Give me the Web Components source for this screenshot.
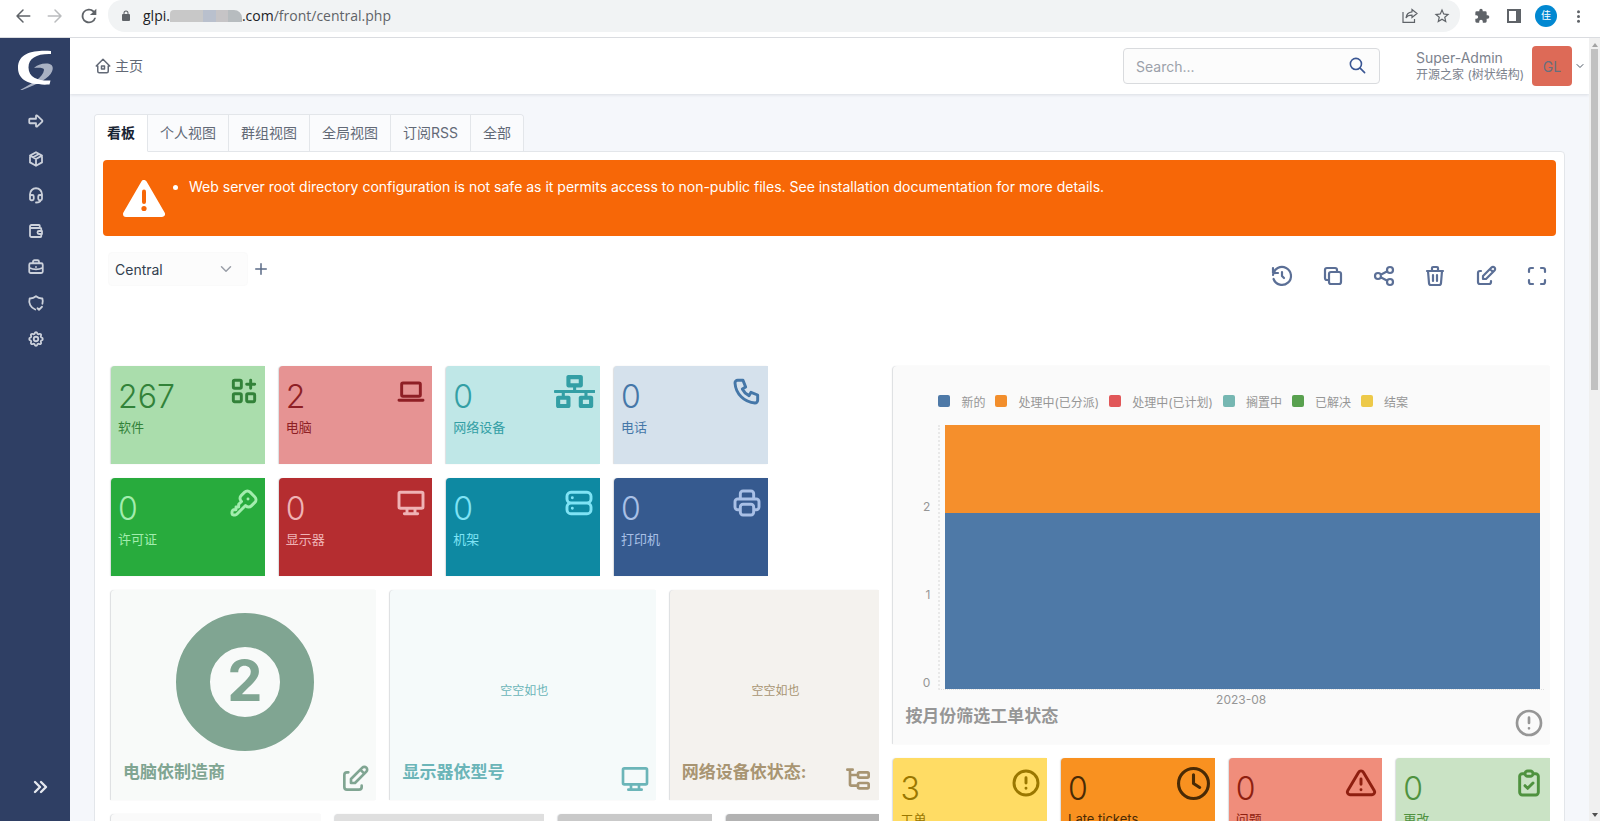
<!DOCTYPE html>
<html lang="zh-CN">
<head>
<meta charset="utf-8">
<title>主页 - GLPI</title>
<style>
html,body{margin:0;height:100%}
body{font-family:Inter,"Noto Sans CJK SC",sans-serif;font-size:14px;color:#626976;background:#f5f7fb;overflow:hidden}
</style>
</head>
<body>
<glpi-app></glpi-app>
<script>
const line = d => ({box:'0 0 24 24', body:`<path d="${d}" fill="none" stroke="currentColor" stroke-width="var(--stroke,2)" style="stroke-width:var(--stroke,2)" stroke-linecap="round" stroke-linejoin="round"/>`});
const ICONS = {
  'arrow-big': line('M4 9h8v-3.586a1 1 0 0 1 1.707-.707l6.586 6.586a1 1 0 0 1 0 1.414l-6.586 6.586a1 1 0 0 1-1.707-.707v-3.586h-8a1 1 0 0 1-1-1v-4a1 1 0 0 1 1-1z'),
  package: line('M12 3l8 4.5v9l-8 4.5l-8-4.5v-9z M12 12l8-4.5 M12 12v9 M12 12l-8-4.5 M16 5.25l-8 4.5'),
  headset: line('M4 15v-4a8 8 0 0 1 16 0v4 M18 19c0 1.657-2.686 3-6 3 M4 14a2 2 0 0 1 2-2h1a2 2 0 0 1 2 2v3a2 2 0 0 1-2 2h-1a2 2 0 0 1-2-2z M15 14a2 2 0 0 1 2-2h1a2 2 0 0 1 2 2v3a2 2 0 0 1-2 2h-1a2 2 0 0 1-2-2z'),
  wallet: line('M17 8v-3a1 1 0 0 0-1-1h-10a2 2 0 0 0 0 4h12a1 1 0 0 1 1 1v3m0 4v3a1 1 0 0 1-1 1h-12a2 2 0 0 1-2-2v-12 M20 12v4h-4a2 2 0 0 1 0-4h4'),
  briefcase: line('M5 7h14a2 2 0 0 1 2 2v9a2 2 0 0 1-2 2h-14a2 2 0 0 1-2-2v-9a2 2 0 0 1 2-2z M8 7v-2a2 2 0 0 1 2-2h4a2 2 0 0 1 2 2v2 M12 12v.01 M3 13a20 20 0 0 0 18 0'),
  shield: line('M11 20.7a12 12 0 0 1-7.5-14.7a12 12 0 0 0 8.500-3a12 12 0 0 0 8.500 3a12 12 0 0 1 0 7 M14 19l2 2l4-4'),
  settings: line('M10.325 4.317c.426-1.756 2.924-1.756 3.350 0a1.724 1.724 0 0 0 2.573 1.066c1.543-.94 3.310.826 2.370 2.370a1.724 1.724 0 0 0 1.065 2.572c1.756.426 1.756 2.924 0 3.350a1.724 1.724 0 0 0-1.066 2.573c.94 1.543-.826 3.310-2.370 2.370a1.724 1.724 0 0 0-2.572 1.065c-.426 1.756-2.924 1.756-3.350 0a1.724 1.724 0 0 0-2.573-1.066c-1.543.94-3.310-.826-2.370-2.370a1.724 1.724 0 0 0-1.065-2.572c-1.756-.426-1.756-2.924 0-3.350a1.724 1.724 0 0 0 1.066-2.573c-.94-1.543.826-3.310 2.370-2.370c1 .608 2.296.07 2.572-1.065z M9 12a3 3 0 1 0 6 0a3 3 0 1 0-6 0'),
  chevrons: line('M7 7l5 5l-5 5 M13 7l5 5l-5 5'),
  home: line('M5 12h-2l9-9l9 9h-2 M5 12v7a2 2 0 0 0 2 2h10a2 2 0 0 0 2-2v-7 M10 12h4v4h-4z'),
  search: line('M3 10a7 7 0 1 0 14 0a7 7 0 1 0-14 0 M21 21l-6-6'),
  down: line('M6 9l6 6l6-6'),
  plus: line('M12 5v14 M5 12h14'),
  history: line('M12 8v4l2 2 M3.050 11a9 9 0 1 1 .5 4 M3 4v5h5 M3 6.500l2.500 2.500'),
  copy: line('M10 8h8a2 2 0 0 1 2 2v8a2 2 0 0 1-2 2h-8a2 2 0 0 1-2-2v-8a2 2 0 0 1 2-2z M16 8v-2a2 2 0 0 0-2-2h-8a2 2 0 0 0-2 2v8a2 2 0 0 0 2 2h2'),
  share: line('M3 12a3 3 0 1 0 6 0a3 3 0 1 0-6 0 M15 6a3 3 0 1 0 6 0a3 3 0 1 0-6 0 M15 18a3 3 0 1 0 6 0a3 3 0 1 0-6 0 M8.700 10.700l6.600-3.400 M8.700 13.300l6.600 3.400'),
  trash: line('M4 7h16 M10 11v6 M14 11v6 M5 7l1 12a2 2 0 0 0 2 2h8a2 2 0 0 0 2-2l1-12 M9 7v-3a1 1 0 0 1 1-1h4a1 1 0 0 1 1 1v3'),
  edit: line('M7 7h-1a2 2 0 0 0-2 2v9a2 2 0 0 0 2 2h9a2 2 0 0 0 2-2v-1 M9 15v-3l8.500-8.500a2.120 2.120 0 0 1 3 3l-8.500 8.500z M16 5l3 3'),
  maximize: line('M4 8v-2a2 2 0 0 1 2-2h2 M4 16v2a2 2 0 0 0 2 2h2 M16 4h2a2 2 0 0 1 2 2v2 M16 20h2a2 2 0 0 0 2-2v-2'),
  apps: line('M5 4h4a1 1 0 0 1 1 1v4a1 1 0 0 1-1 1h-4a1 1 0 0 1-1-1v-4a1 1 0 0 1 1-1z M5 14h4a1 1 0 0 1 1 1v4a1 1 0 0 1-1 1h-4a1 1 0 0 1-1-1v-4a1 1 0 0 1 1-1z M15 14h4a1 1 0 0 1 1 1v4a1 1 0 0 1-1 1h-4a1 1 0 0 1-1-1v-4a1 1 0 0 1 1-1z M14 7h6 M17 4v6'),
  laptop: line('M3 19h18 M6 6h12a1 1 0 0 1 1 1v8a1 1 0 0 1-1 1h-12a1 1 0 0 1-1-1v-8a1 1 0 0 1 1-1z'),
  phone: line('M5 4h4l2 5l-2.500 1.500a11 11 0 0 0 5 5l1.500-2.500l5 2v4a2 2 0 0 1-2 2a16 16 0 0 1-15-15a2 2 0 0 1 2-2'),
  key: line('M16.555 3.843l3.602 3.602a2.877 2.877 0 0 1 0 4.069l-2.643 2.643a2.877 2.877 0 0 1-4.069 0l-.301-.301l-6.558 6.558a2 2 0 0 1-1.239.578l-.175.008h-1.172a1 1 0 0 1-.993-.883l-.007-.117v-1.172a2 2 0 0 1 .467-1.284l.119-.13l.414-.414h2v-2h2v-2l2.144-2.144l-.301-.301a2.877 2.877 0 0 1 0-4.069l2.643-2.643a2.877 2.877 0 0 1 4.069 0z M15 9h.01'),
  desktop: line('M4 4h16a1 1 0 0 1 1 1v10a1 1 0 0 1-1 1h-16a1 1 0 0 1-1-1v-10a1 1 0 0 1 1-1z M7 20h10 M9 16v4 M15 16v4'),
  server: line('M6 4h12a3 3 0 0 1 3 3v2a3 3 0 0 1-3 3h-12a3 3 0 0 1-3-3v-2a3 3 0 0 1 3-3z M6 12h12a3 3 0 0 1 3 3v2a3 3 0 0 1-3 3h-12a3 3 0 0 1-3-3v-2a3 3 0 0 1 3-3z M7 8v.01 M7 16v.01'),
  printer: line('M17 17h2a2 2 0 0 0 2-2v-4a2 2 0 0 0-2-2h-14a2 2 0 0 0-2 2v4a2 2 0 0 0 2 2h2 M17 9v-4a2 2 0 0 0-2-2h-6a2 2 0 0 0-2 2v4 M9 13h6a2 2 0 0 1 2 2v4a2 2 0 0 1-2 2h-6a2 2 0 0 1-2-2v-4a2 2 0 0 1 2-2z'),
  alert: line('M3 12a9 9 0 1 0 18 0a9 9 0 1 0-18 0 M12 8v4 M12 16v.01'),
  triangle: line('M12 9v4 M12 17v.01 M10.240 3.957l-8.240 13.800a2 2 0 0 0 1.700 3h16.600a2 2 0 0 0 1.700-3l-8.240-13.800a2 2 0 0 0-3.520 0z'),
  clipboard: line('M9 5h-2a2 2 0 0 0-2 2v12a2 2 0 0 0 2 2h10a2 2 0 0 0 2-2v-12a2 2 0 0 0-2-2h-2 M11 3h2a2 2 0 0 1 0 4h-2a2 2 0 0 1 0-4z M9 14l2 2l4-4'),
  subtask: line('M6 9h6 M4 5h4 M6 5v11a1 1 0 0 0 1 1h5 M13 7h6a1 1 0 0 1 1 1v2a1 1 0 0 1-1 1h-6a1 1 0 0 1-1-1v-2a1 1 0 0 1 1-1z M13 15h6a1 1 0 0 1 1 1v2a1 1 0 0 1-1 1h-6a1 1 0 0 1-1-1v-2a1 1 0 0 1 1-1z'),
  clock: {box:'0 0 512 512', body:'<circle cx="256" cy="256" r="232" fill="none" stroke="currentColor" stroke-width="48"/><path d="M256 120v136l96 62" fill="none" stroke="currentColor" stroke-width="48" stroke-linecap="round" stroke-linejoin="round"/>'},
  network: {box:'0 0 640 512', body:'<path fill="currentColor" d="M640 264v-16c0-8.840-7.160-16-16-16H344v-40h72c17.670 0 32-14.330 32-32V32c0-17.670-14.330-32-32-32H224c-17.670 0-32 14.330-32 32v128c0 17.670 14.330 32 32 32h72v40H16c-8.840 0-16 7.160-16 16v16c0 8.840 7.160 16 16 16h104v40H64c-17.670 0-32 14.330-32 32v128c0 17.670 14.330 32 32 32h160c17.670 0 32-14.330 32-32V352c0-17.670-14.330-32-32-32h-56v-40h304v40h-56c-17.670 0-32 14.330-32 32v128c0 17.670 14.330 32 32 32h160c17.670 0 32-14.330 32-32V352c0-17.670-14.330-32-32-32h-56v-40h104c8.840 0 16-7.160 16-16zM256 128V64h128v64H256zm-64 320H96v-64h96v64zm352 0h-96v-64h96v64z"/>'},
  warning: {box:'0 0 42 37', body:'<path d="M21 3L39 34H3z" fill="currentColor" stroke="currentColor" stroke-width="6" stroke-linejoin="round"/><path d="M21 11.500v10.500" stroke="#f76707" stroke-width="4" stroke-linecap="round"/><circle cx="21" cy="28.500" r="2.600" fill="#f76707"/>'},
  back: line('M21 12H4 M12 4l-8 8l8 8'),
  forward: line('M3 12h17 M12 4l8 8l-8 8'),
  reload: {box:'0 0 24 24', body:'<path fill="currentColor" d="M17.650 6.350A8 8 0 1 0 19.730 14h-2.080A6 6 0 1 1 12 6c1.660 0 3.140.69 4.220 1.780L13 11h7V4z"/>'},
  lock: {box:'0 0 24 24', body:'<path fill="currentColor" d="M18 8h-1V6A5 5 0 0 0 7 6v2H6a2 2 0 0 0-2 2v10a2 2 0 0 0 2 2h12a2 2 0 0 0 2-2V10a2 2 0 0 0-2-2zM9 8V6a3 3 0 0 1 6 0v2z"/>'},
  send: {box:'0 0 16 16', body:'<path fill="none" stroke="currentColor" stroke-width="1.200" d="M1 4v10.400h11.500V11 M10 1.500l5 4l-5 4v-2.300c-3 0-5 1-6 2.800c.3-3.600 2.600-5.800 6-6.200z"/>'},
  star: {box:'0 0 24 24', body:'<path fill="currentColor" d="M22 9.240l-7.190-.62L12 2 9.190 8.630 2 9.240l5.460 4.730L5.820 21 12 17.270 18.180 21l-1.630-7.030zM12 15.400l-3.760 2.270 1-4.280-3.320-2.880 4.380-.38L12 6.100l1.710 4.040 4.380.38-3.320 2.880 1 4.280z"/>'},
  puzzle: {box:'0 0 24 24', body:'<path fill="currentColor" d="M20.500 11H19V7a2 2 0 0 0-2-2h-4V3.500a2.500 2.500 0 0 0-5 0V5H4a2 2 0 0 0-2 2v3.800h1.500a2.700 2.700 0 0 1 0 5.400H2V20a2 2 0 0 0 2 2h3.800v-1.500a2.700 2.700 0 0 1 5.400 0V22H17a2 2 0 0 0 2-2v-4h1.500a2.500 2.500 0 0 0 0-5z"/>'},
  panel: {box:'0 0 14 14', body:'<path fill="currentColor" fill-rule="evenodd" d="M0 0h14v14H0z M2 2v10h7V2z"/>'},
  dots: {box:'0 0 16 16', body:'<g fill="currentColor"><circle cx="8" cy="3" r="1.600"/><circle cx="8" cy="8" r="1.600"/><circle cx="8" cy="13" r="1.600"/></g>'},
  logo: {box:'0 0 36 40', body:'<path fill="#a9b1c3" d="M17 18c3-3 7-4.500 12-4.500c6 0 8 3 6 8c-3 7-13 12-31 19l-.5-.8C16 33 26 27.500 27 20c.3-2-4-2.500-10-2z"/><path fill="#fff" d="M34 1C18 0 1 2 1 18c0 13 13 17.500 31.500 16.500l1-4C22 31 11.500 28 11.500 17.500C11.500 8 20 3.500 34 4z"/>'}
};

class Base extends HTMLElement {
  constructor(){ super(); this.attachShadow({mode:'open'}); }
  connectedCallback(){ this.shadowRoot.innerHTML = `<style>*{box-sizing:border-box}${this.css()}</style>${this.html()}`; }
  a(n){ return this.getAttribute(n) || ''; }
}

customElements.define('ui-icon', class extends Base {
  css(){ return `:host{display:block;flex:none;height:${this.a('size')||24}px}svg{display:block;height:100%;width:auto}`; }
  html(){ const i = ICONS[this.a('name')]; return `<svg viewBox="${i.box}" aria-hidden="true">${i.body}</svg>`; }
});

customElements.define('browser-bar', class extends Base {
  css(){ return `
    :host{display:flex;align-items:flex-start;height:38px;border-bottom:1px solid #dadce0;background:#fff;color:#5f6368;font-family:"Open Sans","Noto Sans CJK SC",sans-serif}
    button{display:grid;place-items:center;height:32px;border:0;padding:0;background:none;color:inherit}
    .nav{display:flex;gap:16px;width:108px;padding:0 14px}.nav button{width:16px}
    .off{color:#babcbe}
    .url{flex:1;display:flex;align-items:center;height:32px;padding:0 2px 0 12px;border-radius:14px 14px 17px 17px;background:#f1f3f4;font-size:14px;line-height:20px}
    .host{margin-left:11px}.dark{color:#202124}
    .mask{width:72px;height:12px;border-radius:4px 8px 0 0;background:linear-gradient(90deg,#c8c8c8 0 46%,#b9c0cd 46% 64%,#c6c4c6 64% 80%,#b7bcbf 80%)}
    .grow{flex:1}.url button{width:32px}
    .tools{display:flex;width:140px;padding-left:6px}.tools button{width:32px}
    .me span{display:grid;place-items:center;width:22px;height:22px;border-radius:50%;background:#0288d1;color:#fff;font-size:10px;line-height:12px}`; }
  html(){ return `
    <div class="nav"><button aria-label="后退"><ui-icon name="back" size="18"></ui-icon></button><button class="off" aria-label="前进"><ui-icon name="forward" size="18"></ui-icon></button><button aria-label="刷新"><ui-icon name="reload" size="22"></ui-icon></button></div>
    <div class="url"><ui-icon name="lock" size="12"></ui-icon><span class="host dark">glpi.</span><span class="mask"></span><span class="dark">.com</span><span>/front/central.php</span><span class="grow"></span>
      <button aria-label="分享"><ui-icon name="send" size="16"></ui-icon></button><button aria-label="收藏"><ui-icon name="star" size="18"></ui-icon></button></div>
    <div class="tools"><button aria-label="扩展"><ui-icon name="puzzle" size="16"></ui-icon></button><button aria-label="侧边栏"><ui-icon name="panel" size="14"></ui-icon></button><button class="me" aria-label="用户"><span>佳</span></button><button aria-label="菜单"><ui-icon name="dots" size="15"></ui-icon></button></div>`; }
});

customElements.define('side-nav', class extends Base {
  css(){ return `
    :host{display:flex;flex-direction:column;align-items:center;width:70px;background:#2f3f64;color:#ccd1db;padding:12px 0 22px;--stroke:2.4}
    nav{display:flex;flex-direction:column;gap:16px;margin-top:21px;padding-left:2px}
    a,button{display:grid;place-items:center;color:inherit;border:0;background:none;padding:0}
    nav a{width:20px;height:20px}
    nav a:first-child{margin-bottom:2px}
    button{margin-top:auto;margin-left:10px;color:#e4e7ee}`; }
  html(){ const n=[['arrow-big','快捷'],['package','资产'],['headset','支持'],['wallet','管理'],['briefcase','工具'],['shield','系统管理'],['settings','设置']];
    return `<a href="#" aria-label="GLPI"><ui-icon name="logo" size="40"></ui-icon></a><nav>${n.map(([i,t])=>`<a href="#" aria-label="${t}"><ui-icon name="${i}" size="18"></ui-icon></a>`).join('')}</nav><button aria-label="展开菜单"><ui-icon name="chevrons" size="24"></ui-icon></button>`; }
});

customElements.define('top-header', class extends Base {
  css(){ return `
    :host{display:flex;align-items:center;height:56px;padding:0 3px 0 24px;background:#fff;box-shadow:0 1px 3px rgba(30,41,59,.12);position:relative}
    a{display:flex;align-items:center;gap:3px;color:#626976;text-decoration:none;line-height:20px}
    form{display:flex;align-items:center;width:257px;height:36px;margin-left:auto;border:1px solid #d9dbde;border-radius:4px;background:#fcfcfc}
    input{flex:1;min-width:0;height:34px;padding:0 12px;border:0;background:none;font:inherit;color:#232e3c;outline:0}
    input::placeholder{color:#9ba1aa;opacity:1}
    form button{display:grid;place-items:center;width:44px;height:34px;border:0;padding:0 0 2px;background:none;color:#3a5693}
    .user{display:flex;align-items:center;border:0;padding:0;margin-left:36px;background:none;font:inherit;color:#7c828d;text-align:left}
    .who{width:116px;white-space:nowrap}.who b,.who span{display:block;font-weight:400}
    .who b{line-height:18px}.who span{font-size:12px;line-height:16px}
    .av{display:grid;place-items:center;width:40px;height:40px;border-radius:4px;background:#dd6a57;color:#666f7d}
    .user ui-icon{margin-left:2px;color:#4b5563}`; }
  html(){ return `<a href="#"><ui-icon name="home" size="18"></ui-icon>主页</a>
    <form role="search"><input type="text" aria-label="搜索" placeholder="Search..."><button type="button" aria-label="搜索"><ui-icon name="search" size="19"></ui-icon></button></form>
    <button class="user"><span class="who"><b>Super-Admin</b><span>开源之家 (树状结构)</span></span><span class="av">GL</span><ui-icon name="down" size="12"></ui-icon></button>`; }
});

customElements.define('tab-bar', class extends Base {
  css(){ return `
    :host{display:flex;position:relative;margin-bottom:-1px}
    div{display:flex;border:1px solid #e3e6ea;border-bottom:0;border-radius:4px 4px 0 0;overflow:hidden}
    button{height:37px;border:0;border-right:1px solid #e3e6ea;border-bottom:1px solid #e3e6ea;padding:0 12px;background:#fafbfd;font:inherit;line-height:20px;color:#626976}
    button:last-child{border-right:0}
    [aria-selected=true]{background:#fff;border-bottom-color:#fff;color:#182433;font-weight:600}`; }
  html(){ return `<div role="tablist">${['看板','个人视图','群组视图','全局视图','订阅RSS','全部'].map((t,i)=>`<button role="tab" aria-selected="${!i}">${t}</button>`).join('')}</div>`; }
});

customElements.define('alert-box', class extends Base {
  css(){ return `
    :host{display:flex;align-items:center;height:76px;padding:0 20px;border-radius:4px;background:#f76707;color:#fff}
    ul{align-self:flex-start;margin:17px 0 0;padding-left:24px;line-height:20px}`; }
  html(){ return `<ui-icon name="warning" size="37"></ui-icon><ul><li><slot></slot></li></ul>`; }
});

customElements.define('dash-toolbar', class extends Base {
  css(){ return `
    :host{display:flex;height:114px;padding:16px 0 0 5px}
    .pick{display:grid;width:140px;height:34px;background:#fcfcfc;border:1px solid #fafafa;border-radius:4px;align-items:center}
    select,.pick ui-icon{grid-area:1/1}
    select{appearance:none;width:100%;height:32px;border:0;padding:0 6px;background:none;font:inherit;color:#33404f}
    .pick ui-icon{justify-self:end;margin-right:12px;color:#9a9fa8;pointer-events:none}
    button{display:grid;place-items:center;border:0;padding:0;background:none;color:#5b6f96}
    .add{width:26px;height:34px;color:#5b6b86}
    .acts{display:flex;gap:27px;margin-left:auto;margin-top:12px;padding-right:7px;height:24px;--stroke:2.2}.acts button{width:24px}`; }
  html(){ return `<div class="pick"><select aria-label="看板"><option>Central</option></select><ui-icon name="down" size="18"></ui-icon></div><button class="add" aria-label="添加"><ui-icon name="plus" size="18"></ui-icon></button>
    <div class="acts">${[['history','历史'],['copy','复制'],['share','共享'],['trash','删除'],['edit','编辑'],['maximize','全屏']].map(([i,t])=>`<button aria-label="${t}"><ui-icon name="${i}" size="24"></ui-icon></button>`).join('')}</div>`; }
});

const CARD = `:host{display:block;min-width:0;background:var(--bg);color:var(--fg);border-radius:4px 0 0 0;box-shadow:-1px 0 1px rgba(30,41,59,.16);overflow:hidden}`;

customElements.define('number-card', class extends Base {
  css(){ return `${CARD}
    a{display:block;height:100%;padding:9px 5px 8px 7px;color:inherit;text-decoration:none}
    .top{display:flex;justify-content:space-between;align-items:flex-start;--stroke:2.2}
    .n{font-size:32px;font-weight:300;line-height:44px}.l{font-size:13px;line-height:16px}`; }
  html(){ const i=this.a('icon'); return `<a href="#"><div class="top"><span class="n">${this.a('value')}</span><ui-icon name="${i}" size="${i==='clock'||i==='network'?33:32}"></ui-icon></div><div class="l"><slot></slot></div></a>`; }
});

customElements.define('panel-card', class extends Base {
  css(){ return `${CARD}:host{display:flex;flex-direction:column}
    .body{flex:1;min-height:0;display:flex;flex-direction:column}
    footer{display:flex;justify-content:space-between;align-items:flex-start;padding:0 5px 5px 12px}
    h2{margin:0;font-size:17px;line-height:18px;font-weight:700}`; }
  html(){ return `<div class="body"><slot></slot></div><footer><h2>${this.a('heading')}</h2><ui-icon name="${this.a('icon')}" size="32"></ui-icon></footer>`; }
});

customElements.define('empty-note', class extends Base {
  css(){ return `:host{flex:1;display:grid;place-items:center;padding:28px 0 0 2px;font-size:12px;line-height:16px}`; }
  html(){ return `<slot></slot>`; }
});

customElements.define('donut-chart', class extends Base {
  css(){ return `:host{flex:1;display:grid;place-items:center;padding:10px 0 0 2px}svg{display:block;width:138px;height:138px}text{font-size:56px;font-weight:700}`; }
  html(){ return `<svg viewBox="0 0 138 138"><circle cx="69" cy="69" r="52" fill="none" stroke="currentColor" stroke-width="34"/><text x="69" y="88" text-anchor="middle" fill="currentColor">${this.a('value')}</text></svg>`; }
});

customElements.define('status-chart', class extends Base {
  css(){ return `
    :host{display:block;font-size:12px}
    .legend{display:flex;gap:10px;padding:28px 0 13px 45px;line-height:18px;white-space:nowrap}
    .legend span{display:flex;align-items:flex-start;gap:11px}
    i{width:12px;height:12px;margin-top:1px;border-radius:2px}
    .plot{display:grid;grid-template-columns:45px 1fr;padding-right:6px}
    .axis{display:grid;grid-template-rows:repeat(3,88px);align-items:end;justify-items:end;padding-right:8px;line-height:12px}
    .bars{border-left:2px dotted #e8e8e8;border-bottom:1px dotted #e0e0e0;padding:0 4px 0 5px}
    .o{height:88px;background:#f58f2c}.b{height:176px;background:#4e79a7}
    .x{grid-column:2;text-align:center;margin-top:3px;line-height:14px}`; }
  html(){ const l=[['#4e79a7','新的'],['#f28e2c','处理中(已分派)'],['#e15759','处理中(已计划)'],['#76b7b2','搁置中'],['#59a14f','已解决'],['#edc949','结案']];
    return `<div class="legend">${l.map(([c,t])=>`<span><i style="background:${c}"></i>${t}</span>`).join('')}</div>
    <div class="plot"><div class="axis"><span>2</span><span>1</span><span>0</span></div><div class="bars"><div class="o"></div><div class="b"></div></div><div class="x">2023-08</div></div>`; }
});

customElements.define('dash-grid', class extends Base {
  css(){ return `:host{display:grid;grid-template-columns:repeat(26,1fr);grid-auto-rows:42px;gap:14px;padding:0 6px 0 8px}`; }
  html(){ return `<slot></slot>`; }
});

customElements.define('page-scrollbar', class extends Base {
  css(){ return `:host{display:flex;flex-direction:column;align-items:center;width:11px;background:#f0f0f0;padding:5px 0 4px}
    .t{flex:0 0 44%;width:7px;margin-top:2px;background:#c1c1c1}
    .u,.d{border:3px solid transparent}.u{border-top:0;border-bottom:4px solid #a3a3a3}.d{border-bottom:0;border-top:4px solid #505050;margin-top:auto}`; }
  html(){ return `<div class="u"></div><div class="t"></div><div class="d"></div>`; }
});

customElements.define('glpi-app', class extends Base {
  css(){ return `
    :host{display:grid;grid-template-rows:auto 1fr;height:100vh;overflow:hidden}
    .shell{display:grid;grid-template-columns:auto 1fr auto;min-height:0}
    .page{min-width:0;min-height:0;overflow:hidden}
    main{padding:20px 24px}
    .card{border:1px solid #e3e6ea;border-radius:0 4px 4px 4px;background:#fff;padding:8px}
    .board{padding-top:16px}`; }
  html(){
    const pos=(c,w,r,h)=>`grid-area:${r}/${c}/span ${h}/span ${w}`;
    const num=(c,r,bg,fg,v,i,t)=>`<number-card style="${pos(c,3,r,2)};--bg:${bg};--fg:${fg}" value="${v}" icon="${i}">${t}</number-card>`;
    const blank=(c,w,bg)=>`<panel-card style="${pos(c,w,9,4)};--bg:${bg};--fg:#666" heading="" icon="alert"></panel-card>`;
    return `<browser-bar></browser-bar>
    <div class="shell"><side-nav></side-nav>
    <div class="page"><top-header></top-header><main><tab-bar></tab-bar>
      <section class="card">
        <alert-box>Web server root directory configuration is not safe as it permits access to non-public files. See installation documentation for more details.</alert-box>
        <dash-toolbar></dash-toolbar>
        <div class="board"><dash-grid>
          ${num(1,1,'#aaddac','#328239','267','apps','软件')}
          ${num(4,1,'#e69393','#8e1f25','2','laptop','电脑')}
          ${num(7,1,'#bfe7e7','#339fa5','0','network','网络设备')}
          ${num(10,1,'#d5e1ec','#4577a8','0','phone','电话')}
          ${num(1,3,'#28ab3d','#a3edae','0','key','许可证')}
          ${num(4,3,'#b52d30','#efb3b5','0','desktop','显示器')}
          ${num(7,3,'#0e89a2','#7fe3f5','0','server','机架')}
          ${num(10,3,'#365a8f','#a9c0e6','0','printer','打印机')}
          <panel-card style="${pos(1,5,5,4)};--bg:#f8faf9;--fg:#80a592" heading="电脑依制造商" icon="edit"><donut-chart value="2"></donut-chart></panel-card>
          <panel-card style="${pos(6,5,5,4)};--bg:#f5fafa;--fg:#6bb5b8" heading="显示器依型号" icon="desktop"><empty-note>空空如也</empty-note></panel-card>
          <panel-card style="${pos(11,4,5,4)};--bg:#f4f2ee;--fg:#a89572" heading="网络设备依状态:" icon="subtask"><empty-note>空空如也</empty-note></panel-card>
          <panel-card style="${pos(15,12,1,7)};--bg:#fafafa;--fg:#969696" heading="按月份筛选工单状态" icon="alert"><status-chart></status-chart></panel-card>
          ${num(15,8,'#ffdc64','#9a7700','3','alert','工单')}
          ${num(18,8,'#f99120','#492a05','0','clock','Late tickets')}
          ${num(21,8,'#f08d7b','#8e1f10','0','triangle','问题')}
          ${num(24,8,'#cae3c5','#4f923f','0','clipboard','更改')}
          ${blank(1,4,'#fafafa')}${blank(5,4,'#dfdfdf')}${blank(9,3,'#c9c9c9')}${blank(12,3,'#b2b2b2')}
        </dash-grid></div>
      </section></main></div>
    <page-scrollbar></page-scrollbar></div>`; }
});
</script>
</body>
</html>
